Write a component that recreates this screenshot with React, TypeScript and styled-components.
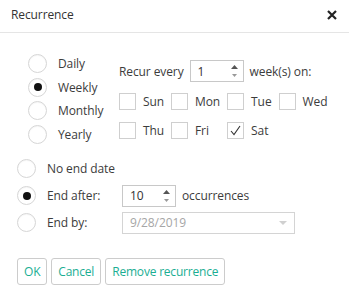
import React, { useState } from "react";
import styled, { createGlobalStyle } from "styled-components";

const GlobalStyle = createGlobalStyle`
	body {
		margin: 0;
		background: #fff;
		font-family: "Open Sans", "Noto Sans", sans-serif;
		font-size: 12px;
		letter-spacing: -0.1px;
		color: #3c3c3c;
	}
`;

// 전체 다이얼로그
const Dialog = styled.div`
	width: 349px;
	height: 298px;
	box-sizing: border-box;
	background: #fff;
`;

const Header = styled.div`
	height: 33px;
	box-sizing: border-box;
	padding: 0 11px 3px 11px;
	display: flex;
	align-items: center;
	justify-content: space-between;
	border-bottom: 1px solid #e5e5e5;
`;

const Title = styled.span`
	font-size: 12px;
	color: #333;
`;

const Close = styled.button`
	border: none;
	background: transparent;
	padding: 0;
	width: 12px;
	height: 12px;
	display: flex;
	align-items: center;
	justify-content: center;
	cursor: pointer;
`;

// 반복 주기 영역
const FrequencyRow = styled.div`
	display: flex;
	padding-left: 28px;
	margin-top: 19px;
`;

const RadioColumn = styled.div`
	width: 91px;
	display: flex;
	flex-direction: column;
`;

const RadioItem = styled.label<{ height: number }>`
	display: flex;
	align-items: center;
	height: ${(props) => props.height}px;
	cursor: pointer;
	white-space: nowrap;
`;

const RadioCircle = styled.span<{ checked: boolean }>`
	width: 19px;
	height: 19px;
	box-sizing: border-box;
	border-radius: 50%;
	border: 1px solid #d6d6d6;
	background: #fff;
	box-shadow: inset 0 1px 1px rgba(0, 0, 0, 0.04);
	margin-right: 11px;
	flex-shrink: 0;
	display: flex;
	align-items: center;
	justify-content: center;
	&::after {
		content: "";
		width: 8px;
		height: 8px;
		border-radius: 50%;
		background: #111;
		display: ${(props) => (props.checked ? "block" : "none")};
	}
`;

const WeeklyPane = styled.div`
	display: flex;
	flex-direction: column;
	padding-top: 8px;
`;

const EveryRow = styled.div`
	display: flex;
	align-items: center;
	height: 22px;
	white-space: nowrap;
`;

const SpinBox = styled.div<{ width: number; gapLeft: number }>`
	width: ${(props) => props.width}px;
	height: 22px;
	box-sizing: border-box;
	border: 1px solid #c8c8c8;
	display: flex;
	align-items: center;
	padding-left: 7px;
	margin: 0 6px 0 ${(props) => props.gapLeft}px;
	position: relative;
	color: #333;
`;

const SpinArrows = styled.span`
	position: absolute;
	right: 5px;
	top: 4px;
	display: flex;
	flex-direction: column;
	gap: 5px;
`;

const DayGrid = styled.div`
	display: grid;
	grid-template-columns: repeat(4, auto);
	justify-content: start;
	row-gap: 12px;
	margin-top: 11px;
`;

const DayItem = styled.label`
	display: flex;
	align-items: center;
	padding-right: 7px;
	cursor: pointer;
`;

const CheckBox = styled.span`
	width: 17px;
	height: 17px;
	box-sizing: border-box;
	border: 1px solid #cfcfcf;
	background: #fff;
	margin-right: 7px;
	display: flex;
	align-items: center;
	justify-content: center;
`;

// 종료 조건 영역
const EndSection = styled.div`
	display: flex;
	flex-direction: column;
	padding-left: 17px;
	margin-top: 9px;
`;

const EndLabel = styled.span`
	width: 75px;
`;

const DateBox = styled.div`
	width: 173px;
	height: 22px;
	box-sizing: border-box;
	border: 1px solid #d4d4d4;
	display: flex;
	align-items: center;
	justify-content: space-between;
	padding: 0 7px;
	color: #a6a6a6;
`;

const Buttons = styled.div`
	display: flex;
	gap: 4px;
	padding-left: 17px;
	margin-top: 22px;
`;

const Button = styled.button`
	height: 27px;
	box-sizing: border-box;
	padding: 0 6px;
	border: 1px solid #cccccc;
	border-radius: 3px;
	background: #fff;
	color: #1aae93;
	font-family: inherit;
	font-size: 12px;
	letter-spacing: -0.2px;
	cursor: pointer;
`;

const Spinner = () => (
	<SpinArrows>
		<svg width="7" height="4" viewBox="0 0 7 4">
			<path d="M0 4 L3.5 0 L7 4 Z" fill="#555" />
		</svg>
		<svg width="7" height="3" viewBox="0 0 7 3">
			<path d="M1 0 L6 0 L3.5 3 Z" fill="#999" />
		</svg>
	</SpinArrows>
);

const frequencies = ["Daily", "Weekly", "Monthly", "Yearly"];
const days = ["Sun", "Mon", "Tue", "Wed", "Thu", "Fri", "Sat"];

const App = () => {
	const [frequency, setFrequency] = useState("Weekly");
	const [checked, setChecked] = useState<string[]>(["Sat"]);
	const [ending, setEnding] = useState("after");

	const toggleDay = (day: string) => {
		setChecked((prev) =>
			prev.includes(day) ? prev.filter((d) => d !== day) : [...prev, day]
		);
	};

	return (
		<Dialog>
			<GlobalStyle />
			<Header>
				<Title>Recurrence</Title>
				<Close>
					<svg width="10" height="10" viewBox="0 0 10 10">
						<path d="M1 1 L9 9 M9 1 L1 9" stroke="#222" strokeWidth="2.2" />
					</svg>
				</Close>
			</Header>
			<FrequencyRow>
				<RadioColumn>
					{frequencies.map((f) => (
						<RadioItem key={f} height={23.5} onClick={() => setFrequency(f)}>
							<RadioCircle checked={frequency === f} />
							{f}
						</RadioItem>
					))}
				</RadioColumn>
				<WeeklyPane>
					<EveryRow>
						Recur every
						<SpinBox width={54} gapLeft={6}>
							1
							<Spinner />
						</SpinBox>
						week(s) on:
					</EveryRow>
					<DayGrid>
						{days.map((d) => (
							<DayItem key={d} onClick={() => toggleDay(d)}>
								<CheckBox>
									{checked.includes(d) && (
										<svg width="11" height="11" viewBox="0 0 11 11">
											<path d="M1 6 L4 9.5 L10 1" fill="none" stroke="#333" strokeWidth="1.1" />
										</svg>
									)}
								</CheckBox>
								{d}
							</DayItem>
						))}
					</DayGrid>
				</WeeklyPane>
			</FrequencyRow>
			<EndSection>
				<RadioItem height={27} onClick={() => setEnding("none")}>
					<RadioCircle checked={ending === "none"} />
					No end date
				</RadioItem>
				<RadioItem height={27} onClick={() => setEnding("after")}>
					<RadioCircle checked={ending === "after"} />
					<EndLabel>End after:</EndLabel>
					<SpinBox width={54} gapLeft={0}>
						10
						<Spinner />
					</SpinBox>
					occurrences
				</RadioItem>
				<RadioItem height={27} onClick={() => setEnding("by")}>
					<RadioCircle checked={ending === "by"} />
					<EndLabel>End by:</EndLabel>
					<DateBox>
						9/28/2019
						<svg width="8" height="4" viewBox="0 0 8 4">
							<path d="M0 0 L8 0 L4 4 Z" fill="#d0d0d0" />
						</svg>
					</DateBox>
				</RadioItem>
			</EndSection>
			<Buttons>
				<Button>OK</Button>
				<Button>Cancel</Button>
				<Button>Remove recurrence</Button>
			</Buttons>
		</Dialog>
	);
};

export default App;
